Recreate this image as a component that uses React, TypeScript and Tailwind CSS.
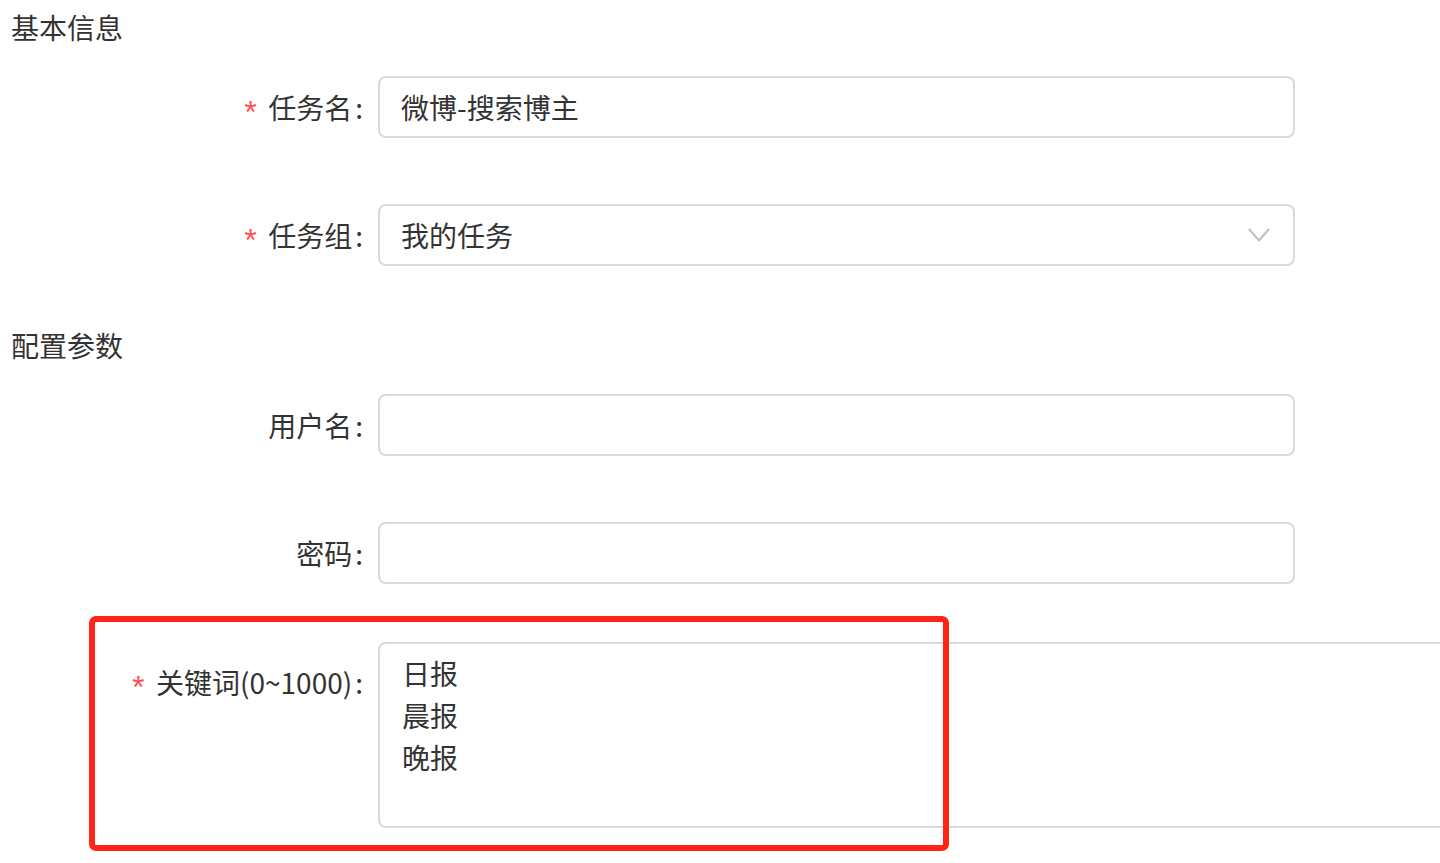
import React from "react";

const FONT = { fontFamily: '"Noto Sans CJK SC", "Noto Sans", sans-serif' };

function Label({ text, required }: { text: string; required?: boolean }) {
  return (
    <div className="w-[378px] shrink-0 flex justify-end items-center pr-[15px] h-[62px] text-[28px] text-[#333333]">
      {required && (
        <span
          className="text-[#ff4d4f] text-[32px] leading-none mr-[8px] translate-y-[9px]"
          style={{ fontFamily: '"Liberation Mono", monospace' }}
        >
          *
        </span>
      )}
      <span>{text}</span>
      <span className="ml-[3px]">:</span>
    </div>
  );
}

function Input({ value, select }: { value?: string; select?: boolean }) {
  return (
    <div className="w-[917px] h-[62px] shrink-0 border-2 border-[#d9d9d9] rounded-[8px] flex items-center pl-[21px] pr-[23px] text-[28px] text-[#333333] bg-white">
      <span className="flex-1">{value}</span>
      {select && (
        <svg width="22" height="14" viewBox="0 0 22 14" fill="none">
          <path d="M1 1 L11 12.5 L21 1" stroke="#bfbfbf" strokeWidth="2" />
        </svg>
      )}
    </div>
  );
}

export default function App() {
  return (
    <div className="relative w-[1440px] h-[863px] overflow-hidden bg-white" style={FONT}>
      <div className="h-[54px] leading-[54px] pl-[11px] text-[28px] text-[#333333]">基本信息</div>

      <div className="flex mt-[22px]">
        <Label text="任务名" required />
        <Input value="微博-搜索博主" />
      </div>

      <div className="flex mt-[66px]">
        <Label text="任务组" required />
        <Input value="我的任务" select />
      </div>

      <div className="h-[54px] leading-[54px] pl-[11px] mt-[52px] text-[28px] text-[#333333]">配置参数</div>

      <div className="flex mt-[22px]">
        <Label text="用户名" />
        <Input />
      </div>

      <div className="flex mt-[66px]">
        <Label text="密码" />
        <Input />
      </div>

      <div className="flex mt-[58px]">
        <div className="pt-[9px]">
          <Label text="关键词(0~1000)" required />
        </div>
        <div className="w-[1100px] h-[186px] shrink-0 border-2 border-[#d9d9d9] rounded-[8px] pt-[8px] pl-[22px] text-[28px] leading-[42px] text-[#333333] bg-white">
          <div>日报</div>
          <div>晨报</div>
          <div>晚报</div>
        </div>
      </div>

      <div className="absolute left-[89px] top-[616px] w-[860px] h-[235px] border-[6px] border-[#ff2416] rounded-[7px] pointer-events-none" />
    </div>
  );
}
